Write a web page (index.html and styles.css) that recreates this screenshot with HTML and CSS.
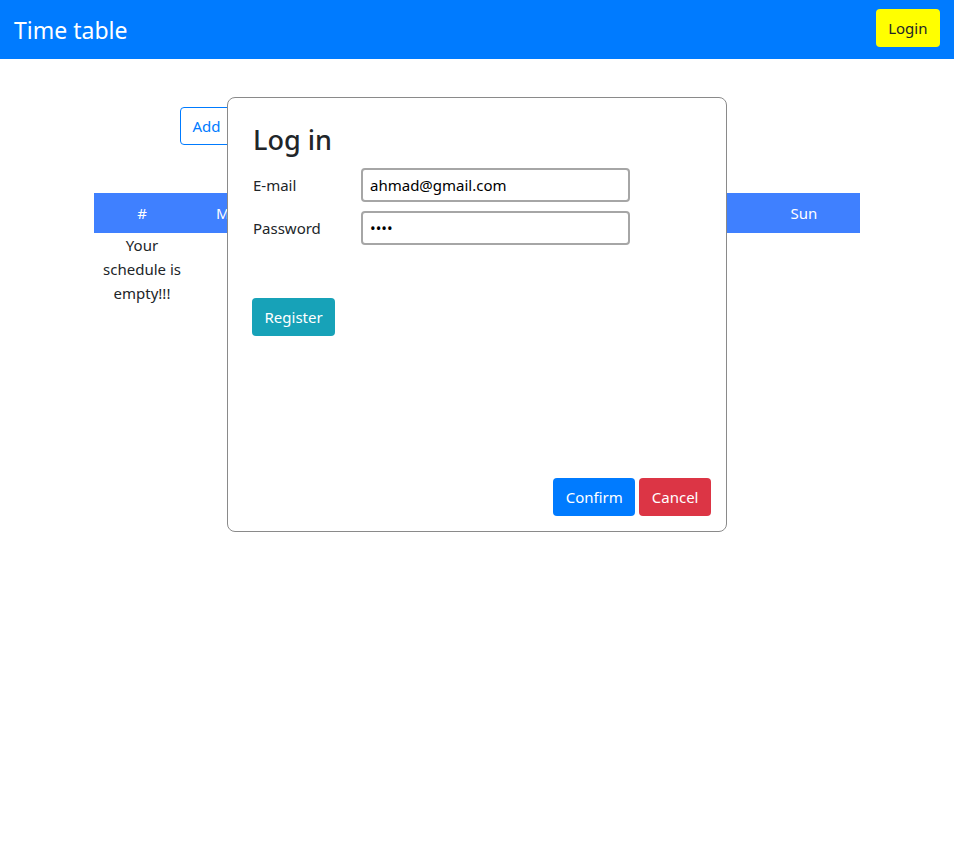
FILE: index.html
```html
<!DOCTYPE html>
<html lang="en">
<head>
<meta charset="utf-8">
<title>Time table</title>
<link rel="stylesheet" href="styles.css">
</head>
<body>
<nav class="navbar">
  <span class="brand">Time table</span>
  <button class="btn btn-yellow">Login</button>
</nav>
<main class="container">
  <div class="toolbar">
    <button class="btn btn-outline">Add</button>
  </div>
  <table class="schedule">
    <colgroup>
      <col class="c-first"><col class="c-mon"><col><col><col><col><col><col class="c-last">
    </colgroup>
    <thead>
      <tr><th>#</th><th>Mon</th><th>Tue</th><th>Wed</th><th>Thu</th><th>Fri</th><th>Sat</th><th>Sun</th></tr>
    </thead>
    <tbody>
      <tr><td>Your schedule is empty!!!</td><td></td><td></td><td></td><td></td><td></td><td></td><td></td></tr>
    </tbody>
  </table>
</main>
<div class="modal">
  <h2 class="modal-title">Log in</h2>
  <div class="form-row">
    <label class="label" for="email">E-mail</label>
    <input class="input" id="email" type="text" value="ahmad@gmail.com">
  </div>
  <div class="form-row">
    <label class="label" for="pw">Password</label>
    <input class="input" id="pw" type="password" value="1234">
  </div>
  <div class="register-row">
    <button class="btn btn-teal">Register</button>
  </div>
  <div class="modal-footer">
    <button class="btn btn-blue">Confirm</button>
    <button class="btn btn-red">Cancel</button>
  </div>
</div>
</body>
</html>
```
FILE: styles.css
```css
* { box-sizing: border-box; }
body {
  margin: 0;
  font-family: "Noto Sans", "Open Sans", sans-serif;
  font-size: 15px;
  line-height: 24px;
  color: #212529;
  background: #fff;
}
.navbar {
  height: 59px;
  background: #007bff;
  display: flex;
  align-items: center;
  justify-content: space-between;
  padding: 0 14px 0 14px;
}
.brand {
  color: #fff;
  font-size: 23px;
  line-height: 30px;
}
.btn {
  font-family: inherit;
  font-size: 15px;
  line-height: 24px;
  padding: 6px 11.5px;
  border: 1px solid transparent;
  border-radius: 4px;
  cursor: pointer;
}
.btn-yellow {
  background: #ffff00;
  color: #212529;
  margin-top: -3px;
}
.container {
  width: 766px;
  margin: 48px auto 0;
}
.toolbar {
  padding-left: 86px;
  margin-bottom: 48px;
}
.btn-outline {
  background: #fff;
  color: #007bff;
  border-color: #007bff;
}
.schedule {
  width: 100%;
  border-collapse: collapse;
  table-layout: fixed;
}
.c-first { width: 96px; }
.c-mon { width: 84px; }
.c-last { width: 112px; }
.schedule th {
  background: #3f80ff;
  color: #fff;
  font-weight: normal;
  padding: 8px 8px;
  text-align: center;
}
.schedule td {
  padding: 0 8px;
  text-align: center;
  vertical-align: top;
}
.modal {
  position: fixed;
  left: 227px;
  top: 97px;
  width: 500px;
  height: 435px;
  background: #fff;
  border: 1px solid #8a8a8a;
  border-radius: 8px;
  padding: 25px 15px 15px 25px;
  display: flex;
  flex-direction: column;
}
.modal-title {
  margin: 0 0 11px;
  font-size: 27px;
  line-height: 34px;
  font-weight: 500;
}
.form-row {
  display: flex;
  align-items: center;
  margin-bottom: 9px;
}
.label {
  width: 108px;
}
.input {
  width: 269px;
  height: 34px;
  border: 2px solid #a6a6a6;
  border-radius: 4px;
  padding: 0 7px;
  font-family: inherit;
  font-size: 15px;
  color: #000;
}
.register-row {
  margin-top: 44px;
  margin-left: -1px;
}
.btn-teal {
  background: #17a2b8;
  color: #fff;
}
.modal-footer {
  margin-top: auto;
  display: flex;
  justify-content: flex-end;
  gap: 4px;
}
.btn-blue {
  background: #007bff;
  color: #fff;
}
.btn-red {
  background: #dc3545;
  color: #fff;
}
```
